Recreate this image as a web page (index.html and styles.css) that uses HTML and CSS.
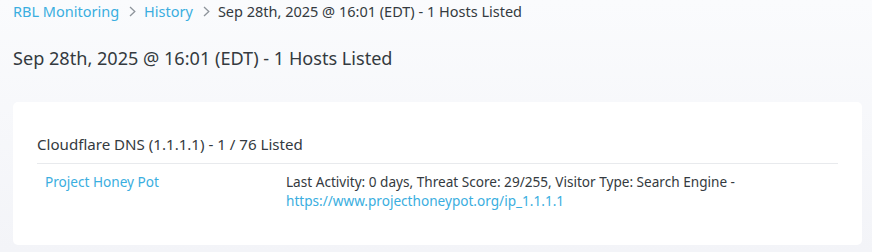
FILE: index.html
```html
<!DOCTYPE html>
<html>
<head>
<meta charset="utf-8">
<link rel="stylesheet" href="styles.css">
</head>
<body>
<nav class="crumbs">
  <a href="#">RBL Monitoring</a>
  <svg class="chev" width="7" height="11" viewBox="0 0 7 11"><path d="M1 1 L5.8 5.5 L1 10" fill="none" stroke="#8e949b" stroke-width="1.3"/></svg>
  <a href="#">History</a>
  <svg class="chev" width="7" height="11" viewBox="0 0 7 11"><path d="M1 1 L5.8 5.5 L1 10" fill="none" stroke="#8e949b" stroke-width="1.3"/></svg>
  <span>Sep 28th, 2025 @ 16:01 (EDT) - 1 Hosts Listed</span>
</nav>
<h1 class="title">Sep 28th, 2025 @ 16:01 (EDT) - 1 Hosts Listed</h1>
<section class="card">
  <h2 class="card-title">Cloudflare DNS (1.1.1.1) - 1 / 76 Listed</h2>
  <table class="list">
    <tr>
      <td class="name"><a href="#">Project Honey Pot</a></td>
      <td class="info">Last Activity: 0 days, Threat Score: 29/255, Visitor Type: Search Engine -<br><a href="#">https://www.projecthoneypot.org/ip_1.1.1.1</a></td>
    </tr>
  </table>
</section>
</body>
</html>
```
FILE: styles.css
```css
html, body { margin: 0; }
body {
  font-family: "Noto Sans", sans-serif;
  color: #343a40;
  background: linear-gradient(#fafbfd, #f3f4f8);
  min-height: 252px;
  padding: 1px 10px 0 13px;
  box-sizing: border-box;
}
a { color: #3aaee0; text-decoration: none; }
.crumbs {
  display: flex;
  align-items: center;
  font-size: 14.5px;
  height: 20px;
}
.chev { margin: 0 8px 0 10px; }
.title {
  font-size: 18.1px;
  font-weight: 400;
  margin: 24px 0 0;
  line-height: 26px;
}
.card {
  background: #fff;
  border-radius: 5px;
  margin-top: 31px;
  padding: 32px 24px 26px;
}
.card-title {
  font-size: 15.1px;
  font-weight: 400;
  margin: 0;
  line-height: 20px;
  padding-bottom: 9px;
  border-bottom: 1px solid #e8eaed;
}
.list { border-collapse: collapse; font-size: 13.6px; }
.list td { vertical-align: top; padding: 8px 8px 9px; line-height: 19px; }
.list .name { width: 225px; }
```
